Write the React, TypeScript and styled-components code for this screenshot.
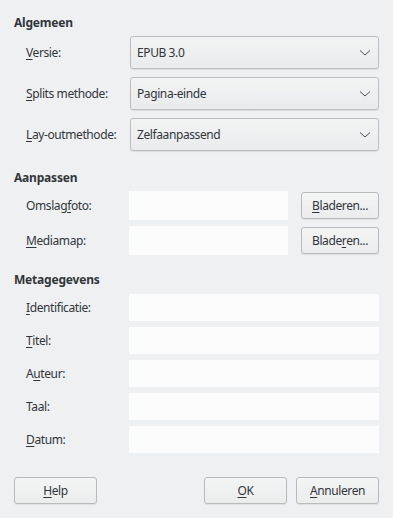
import React from "react";
import styled, { createGlobalStyle } from "styled-components";

const Global = createGlobalStyle`
  html, body { margin: 0; padding: 0; background: #eff0f1; }
  body { font-family: "Noto Sans", "Open Sans", sans-serif; font-size: 12px; letter-spacing: -0.4px; color: #31363b; }
  * { box-sizing: border-box; }
`;

const Dialog = styled.div`
  width: 393px;
  height: 518px;
  padding: 14px 14px 0 14px;
  display: flex;
  flex-direction: column;
`;

const Heading = styled.div<{ $gap: number }>`
  font-weight: bold;
  letter-spacing: -0.2px;
  line-height: 18px;
  height: 18px;
  margin-bottom: ${(p) => p.$gap}px;
`;

const Grid = styled.div<{ $row: number; $gap: number; $after: number }>`
  display: grid;
  grid-template-columns: 103px 1fr;
  grid-auto-rows: ${(p) => p.$row}px;
  row-gap: ${(p) => p.$gap}px;
  padding-left: 12px;
  margin-bottom: ${(p) => p.$after}px;
`;

const Label = styled.label`
  display: flex;
  align-items: center;
  white-space: nowrap;
  line-height: 18px;
`;

const Key = styled.u`
  text-decoration: underline;
  text-underline-offset: 2px;
  text-decoration-thickness: 1px;
`;

const Combo = styled.div`
  margin-left: 1px;
  height: 33px;
  border: 1px solid #bcbebf;
  border-radius: 3px;
  background: linear-gradient(#f2f3f3, #eaebec);
  box-shadow: 0 1px 1px rgba(0, 0, 0, 0.08);
  display: flex;
  align-items: center;
  justify-content: space-between;
  padding: 0 6px 0 6px;
  line-height: 18px;
`;

const Chevron = styled.svg`
  width: 12px;
  height: 8px;
  margin-right: 1px;
`;

const FieldRow = styled.div`
  display: flex;
  align-items: center;
  gap: 13px;
`;

const Field = styled.div<{ $h: number }>`
  flex: 1;
  height: ${(p) => p.$h}px;
  background: #fcfcfc;
`;

const Button = styled.button<{ $w: number }>`
  width: ${(p) => p.$w}px;
  height: 27px;
  border: 1px solid #b8babc;
  border-radius: 3px;
  background: linear-gradient(#f3f4f4, #ebecec);
  box-shadow: 0 1px 1px rgba(0, 0, 0, 0.07);
  font-family: inherit;
  font-size: 12px;
  letter-spacing: inherit;
  color: #31363b;
  padding: 0;
  line-height: 18px;
`;

const Footer = styled.div`
  display: flex;
  gap: 9px;
  margin-top: 24px;
`;

const Spacer = styled.div`
  flex: 1;
`;

const ChevronIcon = () => (
  <Chevron viewBox="0 0 12 8">
    <path d="M1 1.5 L6 6 L11 1.5" fill="none" stroke="#4d5257" strokeWidth="1" />
  </Chevron>
);

export default function App() {
  return (
    <>
      <Global />
      <Dialog>
        <Heading $gap={4}>Algemeen</Heading>
        <Grid $row={33} $gap={8} $after={18}>
          <Label><span><Key>V</Key>ersie:</span></Label>
          <Combo><span>EPUB 3.0</span><ChevronIcon /></Combo>
          <Label><span><Key>S</Key>plits methode:</span></Label>
          <Combo><span>Pagina-einde</span><ChevronIcon /></Combo>
          <Label><span><Key>L</Key>ay-outmethode:</span></Label>
          <Combo><span>Zelfaanpassend</span><ChevronIcon /></Combo>
        </Grid>

        <Heading $gap={4}>Aanpassen</Heading>
        <Grid $row={29} $gap={6} $after={16}>
          <Label><span>Omslag<Key>f</Key>oto:</span></Label>
          <FieldRow>
            <Field $h={29} />
            <Button $w={78}><Key>B</Key>laderen...</Button>
          </FieldRow>
          <Label><span><Key>M</Key>ediamap:</span></Label>
          <FieldRow>
            <Field $h={29} />
            <Button $w={78}>Blade<Key>r</Key>en...</Button>
          </FieldRow>
        </Grid>

        <Heading $gap={5}>Metagegevens</Heading>
        <Grid $row={27} $gap={6} $after={0}>
          <Label><span><Key>I</Key>dentificatie:</span></Label>
          <Field $h={27} />
          <Label><span><Key>T</Key>itel:</span></Label>
          <Field $h={27} />
          <Label><span>A<Key>u</Key>teur:</span></Label>
          <Field $h={27} />
          <Label><span>Taal:</span></Label>
          <Field $h={27} />
          <Label><span><Key>D</Key>atum:</span></Label>
          <Field $h={27} />
        </Grid>

        <Footer>
          <Button $w={83}><Key>H</Key>elp</Button>
          <Spacer />
          <Button $w={83}><Key>O</Key>K</Button>
          <Button $w={83}><Key>A</Key>nnuleren</Button>
        </Footer>
      </Dialog>
    </>
  );
}
